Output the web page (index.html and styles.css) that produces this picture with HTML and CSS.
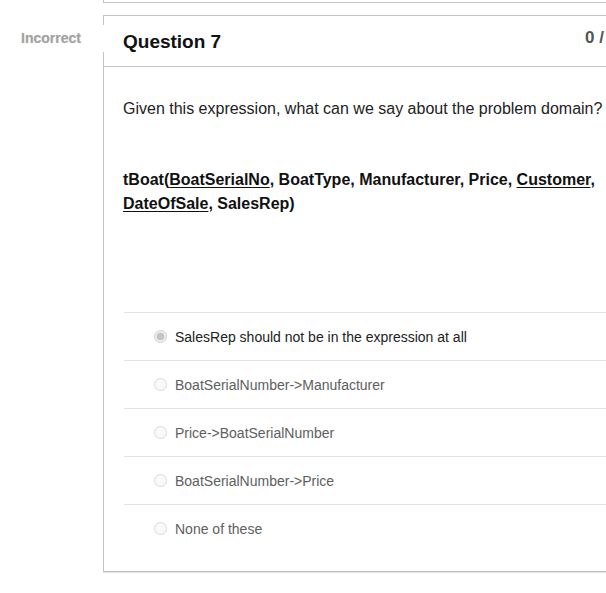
FILE: index.html
```html
<!DOCTYPE html>
<html>
<head>
<meta charset="utf-8">
<link rel="stylesheet" href="styles.css">
</head>
<body>
<div class="quiz">
  <div class="prev-card"></div>
  <div class="question-wrap">
    <div class="answer-arrow">Incorrect</div>
    <div class="card">
      <div class="header">
        <span class="title">Question 7</span>
        <span class="points">0 /</span>
      </div>
      <div class="body">
        <p class="qtext">Given this expression, what can we say about the problem domain?</p>
        <p class="expr"><b>tBoat(<u>BoatSerialNo</u>, BoatType, Manufacturer, Price, <u>Customer</u>, <u>DateOfSale</u>, SalesRep)</b></p>
        <div class="answers">
          <div class="answer selected">
            <svg class="radio" width="13" height="13" viewBox="0 0 13 13"><circle cx="6.5" cy="6.5" r="6" fill="#efefef" stroke="#d0d0d0" stroke-width="1"/><circle cx="6.5" cy="6.5" r="3.8" fill="#c4c4c4"/></svg>
            <span>SalesRep should not be in the expression at all</span>
          </div>
          <div class="answer">
            <svg class="radio" width="13" height="13" viewBox="0 0 13 13"><circle cx="6.5" cy="6.5" r="6" fill="#f9f9f9" stroke="#d8d8d8" stroke-width="1"/></svg>
            <span>BoatSerialNumber-&gt;Manufacturer</span>
          </div>
          <div class="answer">
            <svg class="radio" width="13" height="13" viewBox="0 0 13 13"><circle cx="6.5" cy="6.5" r="6" fill="#f9f9f9" stroke="#d8d8d8" stroke-width="1"/></svg>
            <span>Price-&gt;BoatSerialNumber</span>
          </div>
          <div class="answer">
            <svg class="radio" width="13" height="13" viewBox="0 0 13 13"><circle cx="6.5" cy="6.5" r="6" fill="#f9f9f9" stroke="#d8d8d8" stroke-width="1"/></svg>
            <span>BoatSerialNumber-&gt;Price</span>
          </div>
          <div class="answer">
            <svg class="radio" width="13" height="13" viewBox="0 0 13 13"><circle cx="6.5" cy="6.5" r="6" fill="#f9f9f9" stroke="#d8d8d8" stroke-width="1"/></svg>
            <span>None of these</span>
          </div>
        </div>
      </div>
    </div>
  </div>
</div>
</body>
</html>
```

FILE: styles.css
```css
html, body {
  margin: 0;
  padding: 0;
  overflow: hidden;
  background: #fff;
}
body {
  font-family: "Liberation Sans", Arial, sans-serif;
  color: #222;
  width: 606px;
  height: 593px;
}
.quiz {
  width: 606px;
}
.prev-card {
  margin-left: 103px;
  height: 2px;
  border-left: 1px solid #c4c4c4;
  border-bottom: 1px solid #c4c4c4;
}
.question-wrap {
  position: relative;
  margin-top: 12px;
  padding-left: 103px;
}
.answer-arrow {
  position: absolute;
  left: 0;
  top: 10px;
  width: 83px;
  height: 27px;
  padding-left: 21px;
  background: #fff;
  line-height: 27px;
  font-size: 14px;
  font-weight: bold;
  color: #a3a3a3;
  text-shadow: 0 0 1px #d0d0d0;
  z-index: 2;
}
.card {
  border: 1px solid #c4c4c4;
  border-right: none;
  border-bottom-color: #bdbdbd;
  box-shadow: 0 1px 0 #e6e6e6;
}
.header {
  display: flex;
  justify-content: space-between;
  height: 50px;
  border-bottom: 1px solid #c4c4c4;
  padding: 0 2px 0 19px;
}
.title {
  padding-top: 2px;
  line-height: 48px;
  font-size: 19px;
  font-weight: bold;
  color: #111;
}
.points {
  padding-top: 12px;
  line-height: 20px;
  font-size: 17px;
  font-weight: bold;
  color: #555;
  white-space: nowrap;
}
.body {
  padding: 30px 0 19px 19px;
  font-size: 16px;
  line-height: 24px;
}
.body p {
  margin: 0;
}
.qtext {
  color: #222;
}
.expr {
  margin-top: 47px !important;
  color: #111;
}
.expr u {
  text-decoration-thickness: 1px;
  text-underline-offset: 2px;
}
.answers {
  margin-top: 96px;
  margin-left: 1px;
}
.answer {
  display: flex;
  align-items: center;
  height: 47px;
  border-top: 1px solid #e3e3e3;
  padding-left: 30px;
  font-size: 14px;
  color: #5e5e5e;
}
.answer.selected {
  color: #222;
}
.radio {
  flex: none;
  margin-right: 8px;
}
```
